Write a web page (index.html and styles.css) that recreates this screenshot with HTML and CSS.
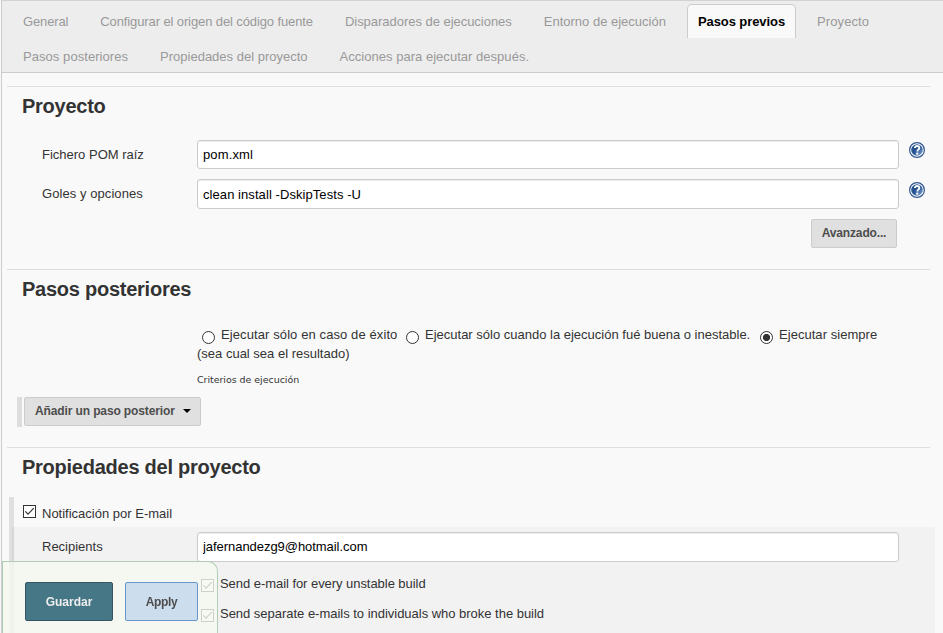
FILE: index.html
```html
<!DOCTYPE html>
<html lang="es">
<head>
<meta charset="utf-8">
<title>Pasos previos</title>
<link rel="stylesheet" href="styles.css">
</head>
<body>
<svg class="defs" aria-hidden="true">
  <defs>
    <linearGradient id="hg" x1="0" y1="0" x2="1" y2="1"><stop offset="0" stop-color="#204a87"/><stop offset=".5" stop-color="#2c5796"/><stop offset="1" stop-color="#86aad4"/></linearGradient>
    <symbol id="help" viewBox="0 0 16 16">
      <circle cx="8" cy="8" r="7.400" fill="#fff" stroke="#2f5591" stroke-width="1.200"/>
      <circle cx="8" cy="8" r="5.800" fill="url(#hg)"/>
      <path d="M5.900 5.900C5.900 3.400 10.300 3.400 10.300 6c0 1.600-2 1.700-2 3.500" fill="none" stroke="#fff" stroke-width="1.900"/>
      <rect x="7.200" y="10.600" width="2.100" height="2" fill="#fff"/>
    </symbol>
    <symbol id="check" viewBox="0 0 13 13">
      <rect x=".5" y=".5" width="12" height="12" fill="#fff" stroke="currentColor"/>
      <path d="M2.300 6.300 5 9.200 10.800 3.200" fill="none" stroke="currentColor" stroke-width="1.200"/>
    </symbol>
  </defs>
</svg>
<div class="page">
  <nav class="tabs">
    <div class="tab-row">
      <a class="tab t1">General</a><a class="tab t2">Configurar el origen del código fuente</a><a class="tab t3">Disparadores de ejecuciones</a><a class="tab t4">Entorno de ejecución</a><a class="tab active">Pasos previos</a><a class="tab t6">Proyecto</a>
    </div>
    <div class="tab-row">
      <a class="tab t7">Pasos posteriores</a><a class="tab t8">Propiedades del proyecto</a><a class="tab t9">Acciones para ejecutar después.</a>
    </div>
  </nav>
  <main>
    <section class="project">
      <h2>Proyecto</h2>
      <div class="field"><label class="l1">Fichero POM raíz</label><input class="i1" type="text" value="pom.xml"><svg class="help"><use href="#help"/></svg></div>
      <div class="field second"><label class="l2">Goles y opciones</label><input class="i2" type="text" value="clean install -DskipTests -U"><svg class="help"><use href="#help"/></svg></div>
      <div class="actions"><button class="btn advanced">Avanzado...</button></div>
    </section>
    <section class="post">
      <h2 class="h-post">Pasos posteriores</h2>
      <div class="choices">
        <div class="choice-row">
          <i class="radio"></i><span class="c1">Ejecutar sólo en caso de éxito</span>
          <i class="radio"></i><span class="c2">Ejecutar sólo cuando la ejecución fué buena o inestable.</span>
          <i class="radio on"></i><span class="c3">Ejecutar siempre</span>
        </div>
        <div class="c4">(sea cual sea el resultado)</div>
        <div class="hint">Criterios de ejecución</div>
      </div>
      <div class="add"><button class="btn add-btn"><span>Añadir un paso posterior</span><i class="caret"></i></button></div>
    </section>
    <section class="props">
      <h2 class="h-props">Propiedades del proyecto</h2>
      <div class="group">
        <div class="notify"><svg class="box"><use href="#check"/></svg><span>Notificación por E-mail</span></div>
        <div class="nested">
          <div class="field"><label class="l3">Recipients</label><input class="i3" type="text" value="jafernandezg9@hotmail.com"></div>
          <div class="option"><svg class="box"><use href="#check"/></svg><span class="o1">Send e-mail for every unstable build</span></div>
          <div class="option"><svg class="box"><use href="#check"/></svg><span class="o2">Send separate e-mails to individuals who broke the build</span></div>
        </div>
      </div>
    </section>
  </main>
</div>
<div class="savebar"><button class="save">Guardar</button><button class="apply">Apply</button></div>
</body>
</html>
```
FILE: styles.css
```css
* { box-sizing: border-box; }
body { margin: 0; height: 633px; overflow: hidden; background: #f9f9f9; color: #333; font: 13px/19px "Liberation Sans", Arial, sans-serif; }
.defs { display: block; width: 0; height: 0; }
.page { height: 633px; overflow: hidden; margin-left: 1px; border-left: 1px solid #ccc; border-top: 1px solid #d3d3cd; }
.tabs { height: 72px; padding: 3px 0 0 10px; background: #ededed; border-bottom: 1px solid #ccc; }
.tab-row { display: flex; height: 35px; }
.tab { height: 34px; padding: 7px 10px 0; margin-right: 10px; border: 1px solid transparent; border-bottom: 0; color: #999; white-space: nowrap; }
.t1 { letter-spacing: -.14px; }
.t2 { letter-spacing: -.11px; }
.t3 { letter-spacing: -.03px; }
.t6 { letter-spacing: .1px; }
.t7 { letter-spacing: .06px; }
.t9 { letter-spacing: .03px; }
.active { color: #000; font-weight: bold; letter-spacing: -.08px; background: #f9f9f9; border-color: #ccc; border-radius: 5px 5px 0 0; }
main { padding: 13px 13px 0 5px; }
section { border-top: 1px solid #ddd; }
.project { height: 183px; }
.post { height: 178px; }
h2 { margin: 0; padding: 7px 0 0 15px; height: 53px; font-size: 20px; line-height: 24px; font-weight: bold; letter-spacing: -.25px; color: #333; white-space: nowrap; }
.field { display: flex; height: 30px; }
label { width: 190px; padding: 5px 0 0 35px; white-space: nowrap; }
input { width: 702px; height: 30px; padding: 0 5px; border: 1px solid #ccc; border-radius: 3px; background: #fff; color: #000; font: inherit; box-shadow: inset 0 1px 1px rgba(0,0,0,.075); }
.project .i1 { height: 29px; letter-spacing: .12px; }
.i2 { letter-spacing: .07px; }
.l2 { letter-spacing: .07px; }
.i3 { padding-bottom: 2px; letter-spacing: -.05px; }
.second { margin-top: 9px; }
.help { width: 16px; height: 16px; margin: 2px 0 0 10px; }
.second .help { margin-top: 3px; }
.actions { display: flex; justify-content: flex-end; padding: 10px 33px 0 0; }
.btn { height: 29px; padding: 0 0 2px; border: 1px solid #ccc; border-radius: 2px; background: #e0e0e0; color: #4d4d4d; font: bold 12px "Liberation Sans", Arial, sans-serif; white-space: nowrap; }
.advanced { width: 86px; letter-spacing: -.15px; }
.choices { height: 74px; padding-left: 190px; white-space: nowrap; }
.choice-row { display: flex; height: 21px; padding: 2px 0 0 5px; }
.radio { flex: none; width: 13px; height: 13px; margin: 6px 6px 0 0; border: 1px solid #333; border-radius: 50%; background: #fff; }
.on { background: radial-gradient(circle, #333 3.300px, #fff 3.900px); }
.c1 { width: 185px; letter-spacing: .1px; }
.c2 { width: 335px; }
.c3 { letter-spacing: .04px; }
.hint { margin-top: 7px; font: 9.500px/19px "DejaVu Sans", sans-serif; letter-spacing: -.05px; }
.h-post { height: 53px; }
.add { height: 30px; margin-left: 10px; border-left: 5px solid #ddd; padding-left: 2px; }
.add-btn { display: flex; align-items: center; justify-content: space-between; width: 177px; padding: 0 9px 2px 10px; letter-spacing: -.12px; }
.caret { border: 4px solid transparent; border-top-color: #000; border-bottom: 0; }
.h-props { height: 49px; }
.group { height: 140px; margin-left: 2px; border-left: 5px solid #e0e0e0; }
.notify { display: flex; height: 30px; padding: 7px 0 0 9px; }
.box { flex: none; width: 13px; height: 13px; margin-right: 6px; }
.notify .box { margin-top: 1px; }
.nested { height: 110px; margin: 0 -5px 0 -2px; padding-top: 5px; border-left: 2px solid #d7d7d7; background: #f2f2f2; }
.nested label { width: 183px; padding-left: 28px; }
.nested .field { height: 42px; }
.option { display: flex; height: 30px; padding-left: 187px; }
.option .box { margin-top: 5px; }
.o1 { letter-spacing: -.05px; }
.o2 { letter-spacing: -.02px; }
.savebar { position: fixed; left: 2px; top: 561px; width: 216px; height: 72px; display: flex; gap: 12px; padding: 20px 0 0 22px; border: 1px solid #b0ceb5; border-bottom: 0; border-radius: 0 10px 0 0; background: rgba(245,249,239,.8); }
.savebar button { height: 39px; padding: 0; border-radius: 2px; font: bold 12px "Liberation Sans", Arial, sans-serif; }
.save { width: 88px; border: 1px solid #355565; background: #457787; color: #eee; }
.apply { width: 73px; border: 1px solid #6696cc; background: #ccddee; color: #4d4d4d; }
.savebar .apply { letter-spacing: -.4px; }
```
